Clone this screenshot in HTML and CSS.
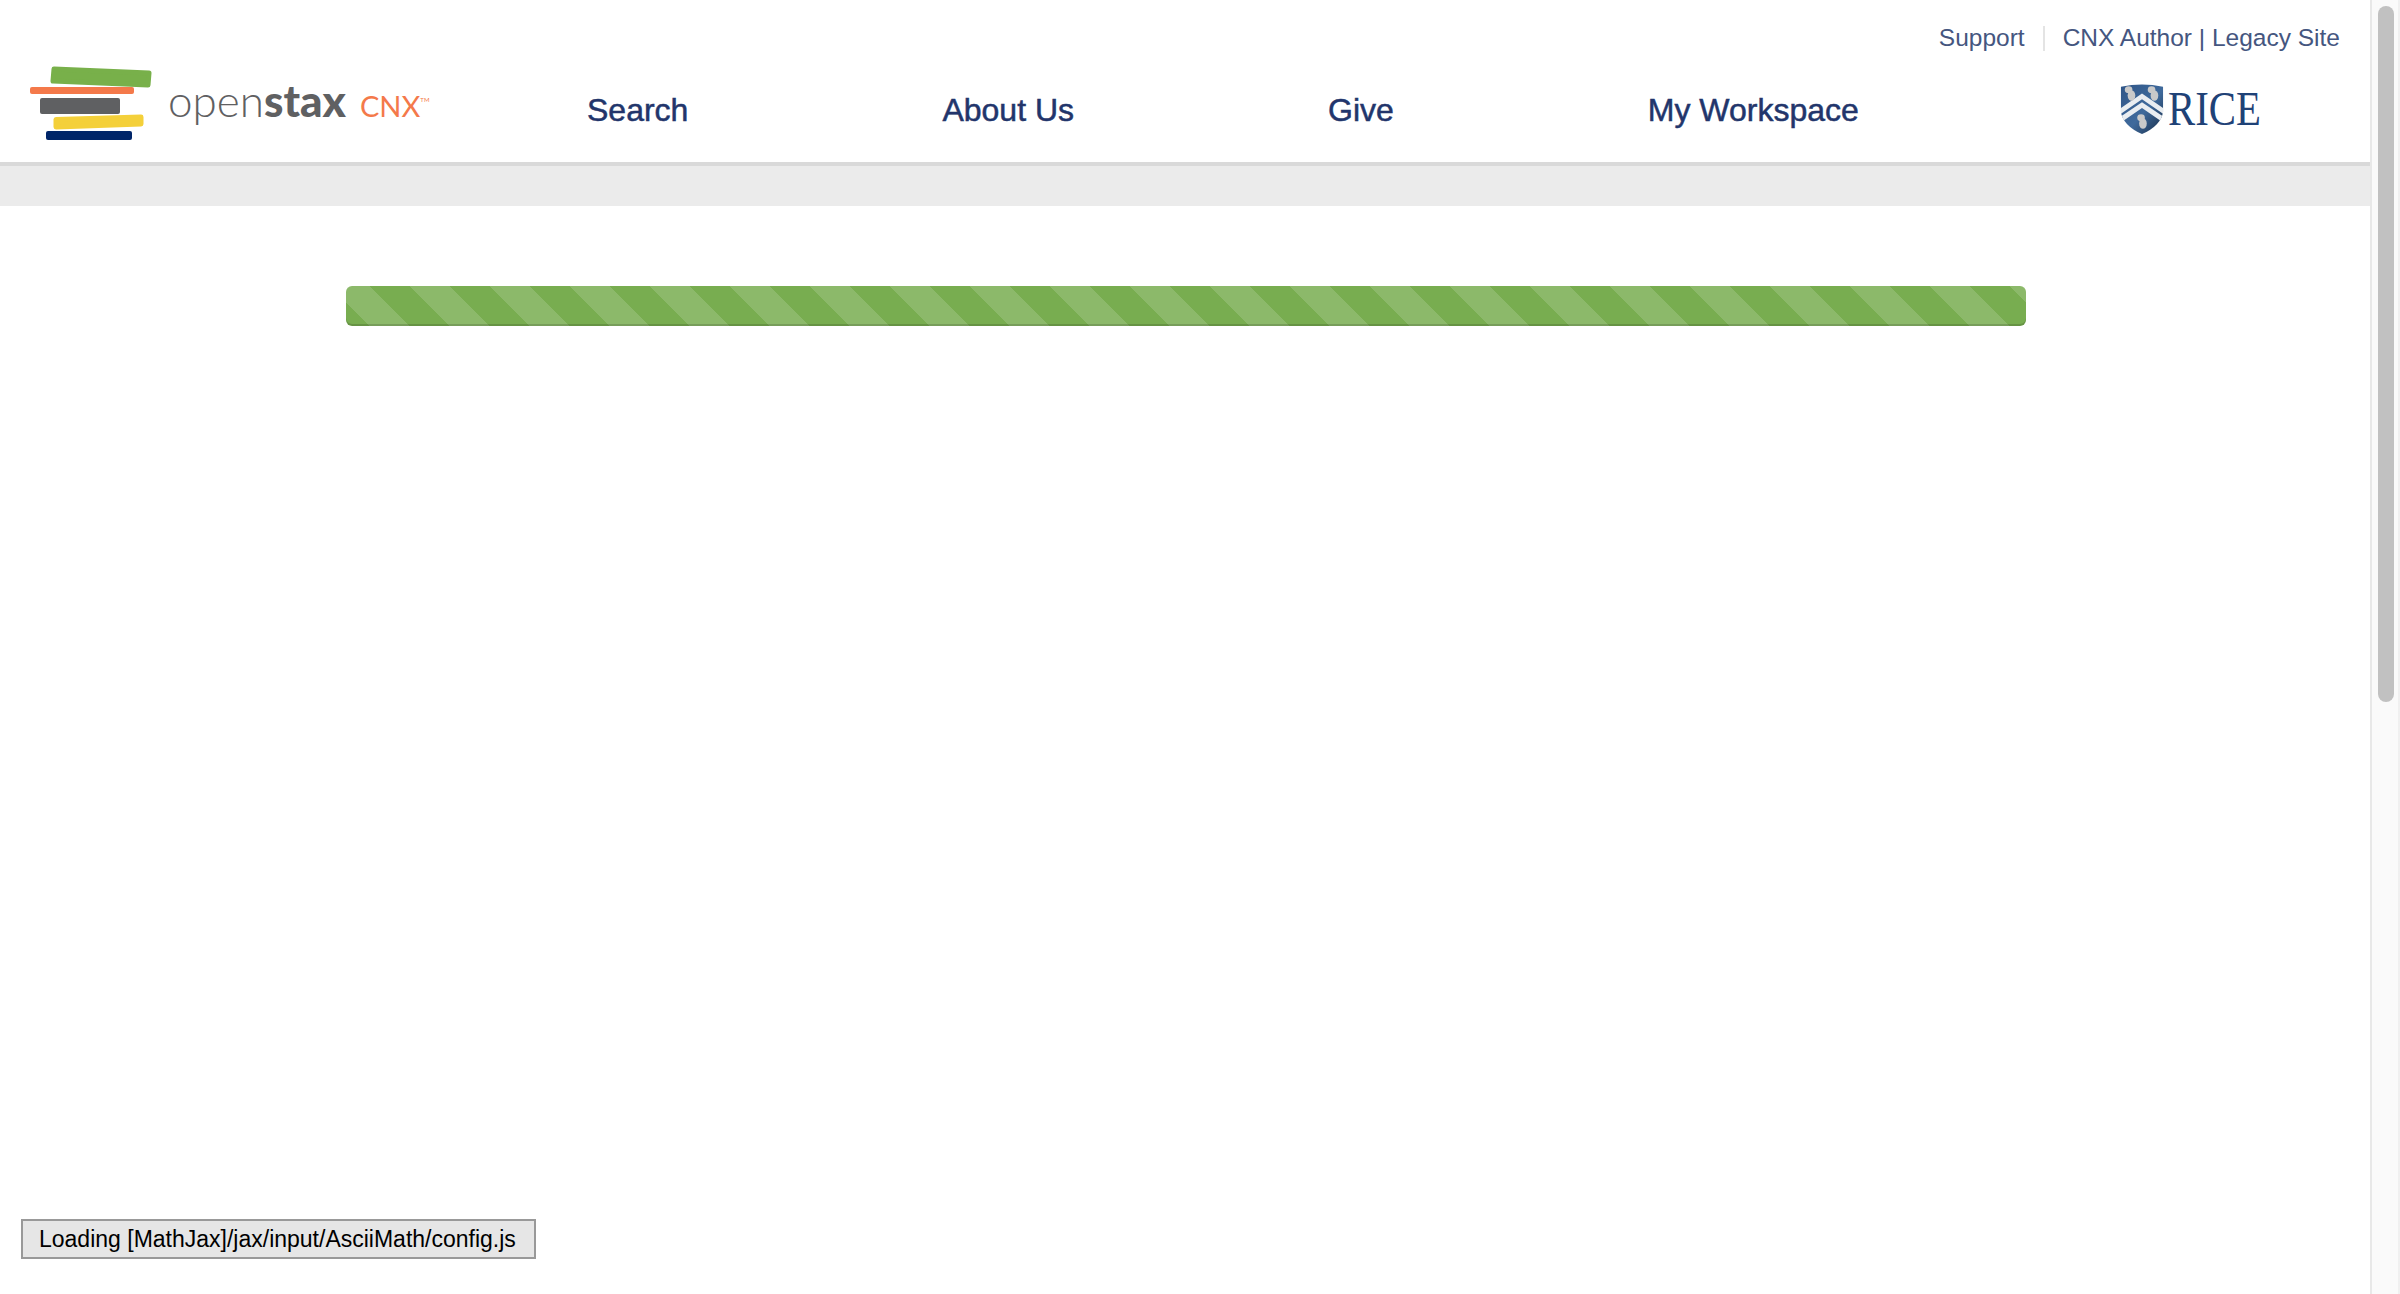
FILE: index.html
```html
<!DOCTYPE html>
<html lang="en">
<head>
    <meta charset="UTF-8">
    <meta name="viewport" content="width=device-width, initial-scale=1.0">
    <title>OpenStax CNX</title>
    <link rel="stylesheet" href="styles.css">
</head>
<body>
    <div class="page">
        <header class="header">
            <div class="util-links">
                <a class="util-link" href="#">Support</a>
                <span class="util-sep"></span>
                <a class="util-link" href="#">CNX Author | Legacy Site</a>
            </div>
            <div class="main-row">
                <a class="logo" href="#">
                    <svg class="logo-books" width="124" height="76" viewBox="0 0 124 76">
                        <g stroke-width="5" stroke-linejoin="round">
                            <polygon points="25,4 120,8 119,20 24,16" fill="#78b04a" stroke="#78b04a"/>
                            <polygon points="27,54.5 112,52 112,59 27,62" fill="#f4d03a" stroke="#f4d03a"/>
                        </g>
                        <rect x="1" y="22" width="104" height="7" rx="2" fill="#f4794a"/>
                        <rect x="11" y="33" width="80" height="16" rx="2" fill="#5f6062"/>
                        <rect x="17" y="66" width="86" height="9" rx="2" fill="#002569"/>
                    </svg>
                    <span class="logo-name"><span class="logo-open">open</span><span class="logo-stax">stax</span></span>
                    <span class="logo-cnx">CNX<sup class="logo-tm">TM</sup></span>
                </a>
                <nav class="nav">
                    <a class="nav-link" href="#">Search</a>
                    <a class="nav-link" href="#">About Us</a>
                    <a class="nav-link" href="#">Give</a>
                    <a class="nav-link" href="#">My Workspace</a>
                </nav>
                <a class="rice" href="#">
                    <svg width="44" height="52" viewBox="0 0 46 54" preserveAspectRatio="none">
                        <defs>
                            <linearGradient id="shieldFill" x1="0" y1="0" x2="1" y2="1">
                                <stop offset="0" stop-color="#2f5587"/>
                                <stop offset="0.55" stop-color="#3f6a9c"/>
                                <stop offset="1" stop-color="#182c47"/>
                            </linearGradient>
                        </defs>
                        <path d="M1 4 Q23 -1 45 4 L45 30 Q43 44 23 53 Q3 44 1 30 Z" fill="url(#shieldFill)"/>
                        <path d="M1 26 L23 11 L45 26 L45 32 L23 17 L1 32 Z" fill="#e9edf1"/>
                        <path d="M2 34 L23 20 L44 34 L42 39 L23 26 L4 39 Z" fill="#e9edf1"/>
                        <g fill="#c9c9c9">
                            <ellipse cx="9" cy="7" rx="4" ry="3.5"/>
                            <ellipse cx="12" cy="13" rx="4" ry="5.5"/>
                            <ellipse cx="33" cy="7" rx="4" ry="3.5"/>
                            <ellipse cx="36" cy="13" rx="4" ry="5.5"/>
                            <ellipse cx="22" cy="36" rx="4" ry="3.5"/>
                            <ellipse cx="24" cy="42" rx="4" ry="5.5"/>
                        </g>
                    </svg>
                    <span class="rice-word">RICE</span>
                </a>
            </div>
        </header>
        <div class="band"></div>
        <main class="content">
            <div class="progress"></div>
        </main>
    </div>
    <div class="scrollbar"><div class="scroll-thumb"></div></div>
    <div class="mathjax-msg">Loading [MathJax]/jax/input/AsciiMath/config.js</div>
</body>
</html>
```

FILE: styles.css
```css
html, body {
    height: 100%;
}
body {
    margin: 0;
    display: flex;
    overflow: hidden;
    background-color: #fff;
    font-family: 'Liberation Sans', Arial, sans-serif;
}
a {
    text-decoration: none;
}
.page {
    flex: 1;
    min-width: 0;
}
.header {
    height: 162px;
    border-bottom: 4px solid #d9d9d9;
}
.util-links {
    display: flex;
    justify-content: flex-end;
    align-items: center;
    height: 30px;
    padding: 23px 30px 0 0;
}
.util-link {
    font-size: 24.5px;
    color: #45567f;
}
.util-sep {
    width: 2px;
    height: 25px;
    margin: 0 18px;
    background-color: #e4e4e4;
}
.main-row {
    display: flex;
    align-items: flex-start;
    height: 109px;
}
.logo {
    display: flex;
    align-items: baseline;
    width: 556px;
    margin-top: 12px;
    padding-left: 29px;
    box-sizing: border-box;
}
.logo-books {
    align-self: flex-start;
    margin-right: 15px;
}
.logo-name {
    font-family: Lato, sans-serif;
    font-size: 44px;
    line-height: 44px;
    color: #5f6062;
    margin-top: 13px;
}
.logo-open {
    font-weight: 300;
}
.logo-stax {
    font-weight: 900;
}
.logo-cnx {
    font-family: Lato, sans-serif;
    font-size: 29px;
    color: #f4794a;
    margin-left: 14px;
}
.logo-tm {
    font-size: 6px;
    vertical-align: 15px;
    line-height: 0;
}
.nav {
    display: flex;
    gap: 254px;
    margin-top: 39px;
    margin-left: 31px;
}
.nav-link {
    font-size: 32px;
    line-height: 36px;
    color: #22356b;
    -webkit-text-stroke: 0.5px #22356b;
}
.rice {
    display: flex;
    align-items: flex-start;
    margin-left: 261px;
    margin-top: 30px;
}
.rice-word {
    margin-left: 4px;
    font-family: 'Liberation Serif', serif;
    font-size: 48px;
    line-height: 52px;
    color: #1f4277;
    transform: scaleX(0.85);
    transform-origin: left center;
}
.band {
    height: 40px;
    background-color: #ebebeb;
}
.content {
    padding-top: 80px;
}
.progress {
    width: 1680px;
    height: 40px;
    margin-left: 346px;
    border-radius: 6px;
    background-color: #78ad50;
    background-image: linear-gradient(45deg, rgba(255,255,255,.15) 25%, transparent 25%, transparent 50%, rgba(255,255,255,.15) 50%, rgba(255,255,255,.15) 75%, transparent 75%, transparent);
    background-size: 80px 80px;
    background-position: 64px 0;
    box-shadow: inset 0 -2px 0 rgba(0,0,0,.15);
}
.scrollbar {
    width: 30px;
    box-sizing: border-box;
    padding: 6px 4px 0 6px;
    background-color: #fafafa;
    border-left: 2px solid #e8e8e8;
    border-right: 2px solid #f0f0f0;
}
.scroll-thumb {
    width: 16px;
    height: 696px;
    border-radius: 8px;
    background-color: #c1c1c1;
}
.mathjax-msg {
    position: fixed;
    left: 21px;
    bottom: 35px;
    width: 515px;
    height: 40px;
    box-sizing: border-box;
    border: 2px solid #999;
    background-color: #e6e6e6;
    padding-left: 16px;
    font-size: 23px;
    line-height: 36px;
    white-space: nowrap;
    color: #000;
}
```
